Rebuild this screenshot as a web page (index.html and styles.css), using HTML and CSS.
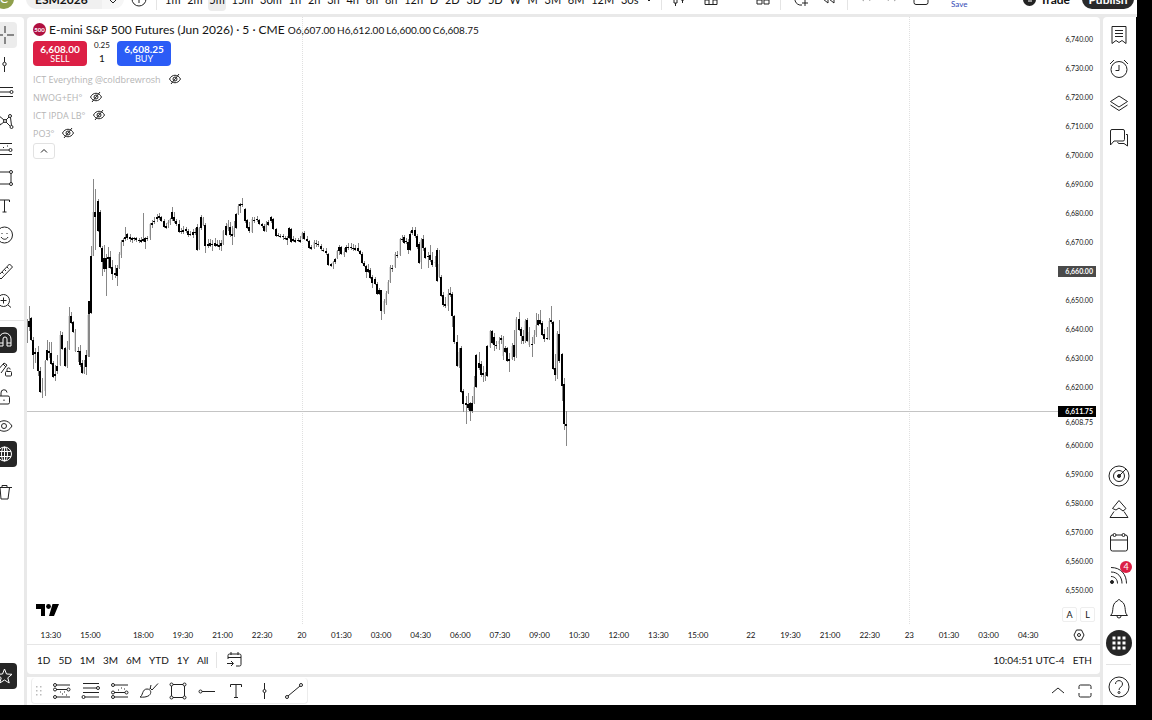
FILE: index.html
```html
<!DOCTYPE html>
<html lang="en">
<head>
<meta charset="utf-8">
<title>ESM2026 chart</title>
<link rel="stylesheet" href="styles.css">
</head>
<body>
<div class="app">
  <header class="topbar">
    <div class="topbar-row">
      <span class="avatar">C</span>
      <button class="symbol">ESM2026</button>
      <button class="tool pill-end" aria-label="Sync"><svg class="i20" viewBox="0 0 20 20"><path d="M5 9l5 5 5-5-3-4H8zM8 9l2 2 2-2"/></svg></button>
      <button class="tool" aria-label="Compare"><svg class="i20" viewBox="0 0 20 20"><circle cx="10" cy="10" r="7"/><path d="M10 6v8M6 10h8"/></svg></button>
      <span class="vline"></span>
      <nav class="intervals" id="intervals"></nav>
      <span class="vline"></span>
      <div class="toolset charttools">
        <button class="tool" aria-label="Candles"><svg class="i20" viewBox="0 0 20 20"><path d="M5 6h3v8H5zM6.500 14v3M12 5h3v6h-3zM13.500 11v3"/></svg></button>
        <button class="tool" aria-label="Indicators"><svg class="i20" viewBox="0 0 20 20"><path d="M4 15.500V11h4V8h4v3h4V6M4 15.500h12V6M8 11v4.500M12 11v4.500"/></svg></button>
        <button class="tool" aria-label="Favorites"><svg class="i8" viewBox="0 0 8 8"><path d="M2 3l2 2 2-2"/></svg></button>
        <button class="tool" aria-label="Layouts"><svg class="i20" viewBox="0 0 20 20"><path d="M4 11h5v4H4zM11 11h5v4h-5zM4 5h5v4H4zM11 5h5v4h-5z"/></svg></button>
      </div>
      <span class="vline"></span>
      <div class="toolset">
        <button class="tool" aria-label="Alert"><svg class="i20" viewBox="0 0 20 20"><path d="M12 16a6 6 0 1 1 4-9M15 10v7M12 14h6"/></svg></button>
        <button class="tool" aria-label="Replay"><svg class="i20" viewBox="0 0 20 20"><path d="M10 6l-5 4 5 4zM16 6l-5 4 5 4z"/></svg></button>
      </div>
      <span class="vline"></span>
      <div class="toolset history">
        <button class="tool faint" aria-label="Undo"><svg class="i20" viewBox="0 0 20 20"><path d="M9 5l-4 4 4 3M5 8h8l2 4"/></svg></button>
        <button class="tool faint" aria-label="Redo"><svg class="i20" viewBox="0 0 20 20"><path d="M11 5l4 4-4 3M15 8H7l-2 4"/></svg></button>
        <button class="tool" aria-label="Layout"><svg class="i20" viewBox="0 0 20 20"><rect x="3" y="3" width="14" height="12.500" rx="2"/></svg></button>
      </div>
      <button class="save">Save</button>
      <button class="trade"><span class="trade-dot"><svg class="i8" viewBox="0 0 8 8"><path d="M3 1v6M5 1v6"/></svg></span>Trade</button>
      <button class="publish">Publish</button>
    </div>
  </header>

  <div class="workspace">
    <aside class="left">
      <div class="lgroup lgroup-draw">
        <button class="lb on" aria-label="Cross"><svg class="i20" viewBox="0 0 20 20"><path d="M10 1v7M10 12v7M1 10h7M12 10h7"/></svg></button>
        <button class="lb" aria-label="Line"><svg class="i20" viewBox="0 0 20 20"><path d="M9.500 3v5M9.500 12v6"/><circle cx="9.500" cy="10" r="1.700"/></svg></button>
        <button class="lb" aria-label="Fib"><svg class="i20" viewBox="0 0 20 20"><path d="M1 5.500h17M1 10h14M1 14.500h17"/><circle cx="16.500" cy="10" r="1.500"/></svg></button>
        <button class="lb" aria-label="Pattern"><svg class="i20" viewBox="0 0 20 20"><path d="M3 4l2 10 4-3M3 4l6 5M11 9l3-3M11 11l4 4M15.500 6.500l1 8"/><circle cx="15" cy="5" r="1.500"/><circle cx="10" cy="10" r="1.500"/><circle cx="16.500" cy="16" r="1.500"/></svg></button>
        <button class="lb" aria-label="Forecast"><svg class="i20" viewBox="0 0 20 20"><path d="M1 4.500h16M1 11h13M1 15.500h16"/><path d="M8 8.500h1M12 7h1"/><circle cx="15.500" cy="11" r="1.500"/></svg></button>
        <button class="lb" aria-label="Shapes"><svg class="i20" viewBox="0 0 20 20"><path d="M1 4h13.500M16 5.500v9M14.500 16H1"/><circle cx="16" cy="4" r="1.500"/><circle cx="16" cy="16" r="1.500"/></svg></button>
        <button class="lb" aria-label="Text"><svg class="i20" viewBox="0 0 20 20"><path d="M4.500 6V4h10v2M9.500 4v12M7.500 16h4"/></svg></button>
        <button class="lb" aria-label="Emoji"><svg class="i20" viewBox="0 0 20 20"><circle cx="9.500" cy="10" r="8"/><path d="M6 12c2 3 5.500 3 7 0M7 8v1M12 8v1"/></svg></button>
      </div>
      <div class="lgroup lgroup-measure">
        <button class="lb" aria-label="Ruler"><svg class="i20" viewBox="0 0 20 20"><path d="M14.500 2l3 3L6 17l-3-3zM12 5l1.500 1.500M9.500 7.500L11 9M7 10l1.500 1.500"/></svg></button>
        <button class="lb" aria-label="Zoom in"><svg class="i20" viewBox="0 0 20 20"><circle cx="8.500" cy="9.500" r="6"/><path d="M13 14l3 2.500M5.500 9.500h6M8.500 6.500v6"/></svg></button>
      </div>
      <div class="lgroup lgroup-modes">
        <button class="lb dark" aria-label="Magnet"><svg class="i20" viewBox="0 0 20 20"><path d="M4 16V9a6 6 0 0 1 12 0v7h-4V9a2 2 0 0 0-4 0v7zM4 13h4M12 13h4"/></svg></button>
        <button class="lb" aria-label="Stay in drawing mode"><svg class="i20" viewBox="0 0 20 20"><path d="M2 12l7-8 3 2-6 8M8 5l3 3"/><rect x="10.500" y="12.500" width="6" height="4.500" rx="1"/><path d="M12 12v-1.500a1.600 1.600 0 0 1 3.200 0"/></svg></button>
        <button class="lb" aria-label="Lock drawings"><svg class="i20" viewBox="0 0 20 20"><rect x="3" y="9" width="11.500" height="8" rx="1.500"/><path d="M6 9V6a3 3 0 0 1 6-.5M9 12.500v1.500"/></svg></button>
        <button class="lb" aria-label="Hide drawings"><svg class="i20" viewBox="0 0 20 20"><path d="M1 10c4-7 12-7 16 0-4 7-12 7-16 0z"/><circle cx="9" cy="10" r="2.500"/></svg></button>
        <button class="lb dark" aria-label="Sync drawings"><svg class="i20" viewBox="0 0 20 20"><circle cx="9.500" cy="10" r="7"/><ellipse cx="9.500" cy="10" rx="3" ry="7"/><path d="M3 7.500h13M3 12.500h13M9.500 3v14"/></svg></button>
      </div>
      <button class="lb trash" aria-label="Remove"><svg class="i20" viewBox="0 0 20 20"><path d="M2 5.500h15M7 5V3.500h5V5M5 5.500l1 11.500h7l1.500-11.500"/></svg></button>
      <button class="lb dark star" aria-label="Favorites"><svg class="i20" viewBox="0 0 20 20"><path d="M9.500 3l2 5 5.500.3-4.200 3.500 1.400 5.200-4.700-3-4.700 3 1.400-5.200L2 8.300 7.500 8z"/></svg></button>
    </aside>

    <main class="center">
      <section class="chart">
        <div class="chart-main">
          <div class="plot">
            <svg class="candles" id="candles" role="img" aria-label="Price candles"></svg>
            <div class="legend">
              <div class="title-row">
                <span class="badge500">500</span>
                <h1 class="title">E-mini S&amp;P 500 Futures (Jun 2026) · 5 · CME</h1>
                <p class="ohlc"><span>O6,607.00</span><span>H6,612.00</span><span>L6,600.00</span><span>C6,608.75</span></p>
              </div>
              <div class="order-row">
                <button class="order sell"><b>6,608.00</b><span>SELL</span></button>
                <div class="spread"><span>0.25</span><span class="qty">1</span></div>
                <button class="order buy"><b>6,608.25</b><span>BUY</span></button>
              </div>
              <ul class="studies" id="studies"></ul>
              <button class="collapse" aria-label="Collapse legend"><svg class="i8" viewBox="0 0 8 8"><path d="M1 5.500l3-3 3 3"/></svg></button>
            </div>
            <svg class="logo" viewBox="0 0 23 12" role="img" aria-label="TradingView"><path d="M0 0h9v12H5V5H0zM16.500 0H23l-5 12h-5z"/><circle cx="12.500" cy="2.500" r="2.400"/></svg>
          </div>
          <div class="price-axis">
            <ol class="prices" id="prices"></ol>
            <div class="scale-btns"><button>A</button><button>L</button></div>
          </div>
        </div>
        <div class="time-row">
          <div class="times" id="times"></div>
          <button class="axis-settings" aria-label="Axis settings"><svg class="i12" viewBox="0 0 12 12"><path d="M3.500 1h5L11 6l-2.500 5h-5L1 6z"/><circle cx="6" cy="6" r="1.500"/></svg></button>
        </div>
        <div class="ranges">
          <button>1D</button><button>5D</button><button>1M</button><button>3M</button><button>6M</button><button>YTD</button><button>1Y</button><button>All</button>
          <span class="vline"></span>
          <button class="goto" aria-label="Go to date"><svg class="i18" viewBox="0 0 18 18"><path d="M3 8V4.500A1.500 1.500 0 0 1 4.500 3h10A1.500 1.500 0 0 1 16 4.500v9a1.500 1.500 0 0 1-1.500 1.500H11M3 6.500h13M6 1v3M13 1v3M2 12.500h6M6 10l2.500 2.500L6 15"/></svg></button>
          <button class="clock">10:04:51 UTC-4</button>
          <button>ETH</button>
        </div>
      </section>

      <section class="bottom">
        <div class="favs">
          <svg class="grip" viewBox="0 0 8 12"><path d="M1 1h1.500v1.500H1zM5 1h1.500v1.500H5zM1 5h1.500v1.500H1zM5 5h1.500v1.500H5zM1 9h1.500v1.500H1zM5 9h1.500v1.500H5z"/></svg>
          <button aria-label="Fib channel"><svg class="i20" viewBox="0 0 20 20"><path d="M4 4h14M4 8.500h11M4 16h14"/><path d="M8 11h1M12 11h1M10 13h1M14 14h1"/><circle cx="3" cy="4" r="1.500"/><circle cx="3" cy="8.500" r="1.500"/><circle cx="16.500" cy="8.500" r="1.500"/><circle cx="3" cy="16" r="1.500"/></svg></button>
          <button aria-label="Fib retracement"><svg class="i20" viewBox="0 0 20 20"><path d="M2 2.500h16M2 7h14M2 11.500h16M4 16h14"/><circle cx="17" cy="7" r="1.500"/><circle cx="2.500" cy="16" r="1.500"/></svg></button>
          <button aria-label="Position"><svg class="i20" viewBox="0 0 20 20"><path d="M4 4h14M4 11.500h11M4 16h14"/><path d="M8 9h1M11 7h1M14 8h1"/><circle cx="3" cy="4" r="1.500"/><circle cx="3" cy="11.500" r="1.500"/><circle cx="16.500" cy="11.500" r="1.500"/><circle cx="3" cy="16" r="1.500"/></svg></button>
          <button aria-label="Brush"><svg class="i20" viewBox="0 0 20 20"><path d="M1 16c3-1 2-8 7-8 4 0 5 4 2 6.500C8 16 4 16.500 1 16zM11 8l1-4M13 9l6-6.500M11 7l2 2"/></svg></button>
          <button aria-label="Rectangle"><svg class="i20" viewBox="0 0 20 20"><path d="M5 3.500h10M5 16.500h10M3.500 5v10M16.500 5v10"/><circle cx="3.500" cy="3.500" r="1.500"/><circle cx="16.500" cy="3.500" r="1.500"/><circle cx="3.500" cy="16.500" r="1.500"/><circle cx="16.500" cy="16.500" r="1.500"/></svg></button>
          <button aria-label="Horizontal ray"><svg class="i20" viewBox="0 0 20 20"><path d="M5 10.500h13"/><circle cx="3.500" cy="10.500" r="1.500"/></svg></button>
          <button aria-label="Text"><svg class="i20" viewBox="0 0 20 20"><path d="M4.500 6V3.500h11V6M10 4v12M8 16.500h4"/></svg></button>
          <button aria-label="Vertical line"><svg class="i20" viewBox="0 0 20 20"><path d="M9.500 2v6.500M9.500 11.500V18"/><circle cx="9.500" cy="10" r="1.500"/></svg></button>
          <button aria-label="Trend line"><svg class="i20" viewBox="0 0 20 20"><path d="M4 15L16 5"/><circle cx="3" cy="16" r="1.500"/><circle cx="17" cy="4" r="1.500"/></svg></button>
        </div>
        <div class="panel-btns">
          <button aria-label="Open panel"><svg class="i18" viewBox="0 0 18 18"><path d="M3 11l6-5 6 5"/></svg></button>
          <button aria-label="Maximize"><svg class="i18" viewBox="0 0 18 18"><path d="M3 7V4.500A1.500 1.500 0 0 1 4.500 3h9A1.500 1.500 0 0 1 15 4.500V7M3 11v2.500A1.500 1.500 0 0 0 4.500 15h9a1.500 1.500 0 0 0 1.500-1.500V11"/></svg></button>
        </div>
      </section>
    </main>

    <aside class="right">
      <div class="rgroup">
        <button class="rb" aria-label="Watchlist"><svg class="i22" viewBox="0 0 22 22"><path d="M4 2.500h14v17l-4-3-3 2-3-2-4 3zM7 6.500h8M7 9.500h8M7 12.500h8"/></svg></button>
        <button class="rb" aria-label="Alerts"><svg class="i22" viewBox="0 0 22 22"><circle cx="11" cy="11.500" r="8"/><path d="M11 7v5.500H7.500M2 6l4-4M20 6l-4-4"/></svg></button>
        <button class="rb" aria-label="Object tree"><svg class="i22" viewBox="0 0 22 22"><path d="M11 4l8.500 5.500L11 15 2.500 9.500zM2.500 13L11 18.500l8.500-5.500"/></svg></button>
        <button class="rb" aria-label="Chats"><svg class="i22" viewBox="0 0 22 22"><path d="M2.500 19V5A1.500 1.500 0 0 1 4 3.500h11A1.500 1.500 0 0 1 16.500 5v8.500a1.500 1.500 0 0 1-1.500 1.500H6zM18 8.500h1.500V20L16 17.500h-5.500L9.500 16"/></svg></button>
      </div>
      <div class="rgroup rgroup-low">
        <button class="rb" aria-label="Screeners"><svg class="i22" viewBox="0 0 22 22"><circle cx="11" cy="11" r="10"/><circle cx="11" cy="11" r="5.500"/><circle class="fill" cx="11" cy="11" r="1.500"/><path d="M11 11l7-7"/></svg></button>
        <button class="rb" aria-label="Pine"><svg class="i22" viewBox="0 0 22 22"><path d="M11 2.500l7 8-3 2.500-4-3-3 2-3.500-1.500zM6 13.500L2 19.500h18l-4-6"/></svg></button>
        <button class="rb" aria-label="Calendar"><svg class="i22" viewBox="0 0 22 22"><path d="M5.500 4h-1A2 2 0 0 0 2.500 6v12a2 2 0 0 0 2 2h13a2 2 0 0 0 2-2V6a2 2 0 0 0-2-2h-1M8 4h6M2.500 9h17"/><circle cx="6.500" cy="4" r="1.500"/><circle cx="15.500" cy="4" r="1.500"/></svg></button>
        <button class="rb" aria-label="News feed, 4 new"><svg class="i22" viewBox="0 0 22 22"><circle class="fill" cx="4" cy="18" r="1.500"/><path d="M3 12.500c4 0 6.500 3 6.500 7M3 8c7 0 11 5 11 11.500M3 3.500c10 0 15.500 7 15.500 16"/></svg><span class="count">4</span></button>
        <button class="rb" aria-label="Notifications"><svg class="i22" viewBox="0 0 22 22"><path d="M2.500 18.500c2.500-2 2-5 2.500-8 .5-4 2.500-6 4.500-6.500C10 2 12 2 12.500 4c2 .5 4 2.500 4.500 6.500.5 3 0 6 2.500 8zM9 19a2 2 0 0 0 4 0"/></svg></button>
        <button class="rb apps" aria-label="Products"><svg class="i26" viewBox="0 0 26 26"><circle class="disc" cx="13" cy="13" r="13"/><path class="dots" d="M6 6h4v4H6zM11 6h4v4h-4zM16 6h4v4h-4zM6 11h4v4H6zM11 11h4v4h-4zM16 11h4v4h-4zM6 16h4v4H6zM11 16h4v4h-4zM16 16h4v4h-4z"/></svg></button>
        <span class="hline"></span>
        <button class="rb" aria-label="Help"><svg class="i22" viewBox="0 0 22 22"><circle cx="11" cy="11" r="10"/><path d="M7.500 8c0-4.500 7-4.500 7 0 0 3-3.500 3-3.500 6"/><circle cx="11" cy="16.500" r="1"/></svg></button>
      </div>
    </aside>
  </div>
</div>
<script src="chart.js"></script>
</body>
</html>
```
FILE: styles.css
```css
* { box-sizing: border-box; }
body {
  margin: 0;
  height: 100vh;
  padding: 0 15px 15px 0;
  overflow: hidden;
  background: #000;
  color: #131313;
  font-family: Lato, "Open Sans", sans-serif;
  font-size: 10px;
}
button { border: 0; padding: 0; margin: 0; background: none; color: inherit; font: inherit; }
svg { display: block; flex: none; fill: none; stroke: #222; stroke-width: 1; }
.fill { fill: #222; }
.i8 { width: 8px; height: 8px; }
.i12 { width: 12px; height: 12px; }
.i18 { width: 18px; height: 18px; }
.i20 { width: 20px; height: 20px; }
.i22 { width: 22px; height: 22px; }
.i26 { width: 26px; height: 26px; }
.vline { width: 1px; height: 22px; background: #e4e4e4; }

.app { height: 100%; display: flex; flex-direction: column; gap: 3px; background: #e9e9e9; overflow: hidden; }

/* Top bar, scrolled half out of view */
.topbar { flex: none; height: 14px; overflow: hidden; background: #fff; }
.topbar-row { display: flex; align-items: center; height: 24px; margin-top: -13px; padding: 0 3px 0 0; font-size: 12px; }
.avatar { flex: none; width: 20px; height: 20px; margin: 0 12px 0 -6px; border-radius: 50%; background: #8f9f4c; color: #fff; text-align: center; line-height: 20px; }
.symbol { width: 76px; height: 20px; padding-left: 9px; border-radius: 10px 0 0 10px; background: #f0f0f0; text-align: left; font-weight: 700; }
.tool { display: flex; align-items: center; justify-content: center; }
.pill-end { width: 22px; height: 20px; margin-right: 5px; border-radius: 0 10px 10px 0; background: #f6f6f6; }
.topbar .vline { margin: 0 7px; }
.intervals { flex: 1; display: flex; justify-content: space-between; font-size: 11px; }
.intervals button { height: 24px; padding: 0 1px; border-radius: 4px; }
.intervals .on { background: #ececec; }
.toolset { display: flex; gap: 8px; padding: 0 2px; align-items: center; }
.charttools { gap: 12px; padding: 0; }
.faint { opacity: .4; }
.history { padding: 0; }
.save { width: 56px; padding-top: 10px; font-size: 8px; line-height: 10px; color: #3147b5; }
.trade { display: flex; align-items: center; gap: 4px; margin: 0 12px 0 36px; font-weight: 700; }
.trade-dot { display: flex; align-items: center; justify-content: center; width: 13px; height: 13px; border-radius: 50%; background: #222; }
.trade-dot svg { stroke: #fff; }
.publish { width: 52px; height: 20px; border-radius: 10px; background: #2a2a2a; color: #fff; font-weight: 700; }

.workspace { flex: 1; min-height: 0; display: flex; gap: 3px; }

/* Drawing toolbar, its left edge cut by the window */
.left { flex: none; width: 31px; margin-left: -7px; padding: 5px 0 16px; background: #fff; display: flex; flex-direction: column; border-radius: 0 4px 0 0; }
.lgroup { display: flex; flex-direction: column; justify-content: space-between; }
.lgroup-draw { height: 226px; }
.lgroup-measure { height: 66px; padding: 11px 0 0; }
.lgroup-modes { height: 147px; margin-top: 6px; padding-top: 6px; border-top: 1px solid #e4e4e4; }
.lb { flex: none; width: 24px; height: 26px; display: flex; align-items: center; justify-content: center; border-radius: 4px; }
.lb.on { background: #ececec; }
.lb.dark { background: #262626; }
.lb.dark svg { stroke: #fff; }
.trash { margin-top: 12px; }
.star { margin-top: auto; }

.center { flex: 1; min-width: 0; display: flex; flex-direction: column; gap: 3px; }
.chart { flex: 1; min-height: 0; display: flex; flex-direction: column; background: #fff; border-radius: 4px; overflow: hidden; }
.chart-main { flex: 1; min-height: 0; display: flex; }
.plot { position: relative; flex: 1; min-width: 0; display: flex; flex-direction: column; justify-content: space-between; align-items: flex-start; padding: 4px 0 9px 6px; }
.candles { position: absolute; inset: 0; width: 100%; height: 100%; shape-rendering: crispEdges; }
.legend { position: relative; display: flex; flex-direction: column; align-items: flex-start; }
.title-row { display: flex; align-items: center; gap: 3px; height: 17px; }
.badge500 { width: 13px; height: 13px; border-radius: 50%; background: #b01040; color: #fff; font-size: 6px; font-weight: 700; line-height: 13px; text-align: center; }
.title { margin: 0; font-size: 12px; font-weight: 400; line-height: 16px; white-space: nowrap; }
.ohlc { display: flex; gap: 2px; margin: 0; line-height: 14px; }
.order-row { display: flex; margin-top: 3px; }
.order { width: 54px; height: 25px; display: flex; flex-direction: column; align-items: center; justify-content: center; border-radius: 4px; color: #fff; font-size: 9px; line-height: 10px; }
.order b { font-size: 10px; }
.sell { background: #dc1f45; }
.buy { background: #2b5cf6; }
.spread { width: 30px; display: flex; flex-direction: column; align-items: center; font-size: 8px; line-height: 8px; }
.qty { font-size: 10px; line-height: 18px; }
.studies { list-style: none; margin: 3px 0 0; padding: 0; color: #b5b5b5; font-family: "Open Sans", sans-serif; font-size: 9px; }
.studies li { display: flex; align-items: center; gap: 8px; height: 18px; }
.collapse { display: flex; align-items: center; justify-content: center; width: 22px; height: 16px; margin-top: 1px; border: 1px solid #e2e2e2; border-radius: 3px; }
.logo { position: relative; width: 23px; height: 12px; margin-left: 3px; fill: #000; stroke: none; }

.price-axis { flex: none; width: 42px; display: flex; flex-direction: column; justify-content: space-between; padding: 8px 4px 3px 0; }
.prices { list-style: none; margin: 0; padding: 0; font-size: 7px; }
.prices li { height: 29px; display: flex; flex-direction: column; justify-content: center; line-height: 11px; text-align: right; }
.prices span { padding-right: 3px; }
.prices .tag { background: #000; color: #fff; font-weight: 700; }
.prices .tag-grey { background: #4a4a4a; color: #fff; font-weight: 700; }
.scale-btns { display: flex; gap: 3px; padding-left: 4px; font-size: 9px; }
.scale-btns button { width: 15px; height: 15px; border: 1px solid #eee; border-radius: 2px; }
.time-row { flex: none; display: flex; align-items: center; height: 20px; padding-top: 1px; border-bottom: 1px solid #e6e6e6; font-size: 8px; }
.times { flex: 1; display: flex; padding: 0 10px 0 4px; text-align: center; }
.tick { flex: 3 1 0; min-width: 0; }
.gap { flex: 1 1 0; }
.axis-settings { width: 42px; display: flex; justify-content: center; }
.ranges { flex: none; display: flex; align-items: center; gap: 8px; height: 29px; padding: 0 8px 0 10px; }
.ranges .vline { height: 16px; }
.clock { margin-left: auto; }

.bottom { flex: none; height: 28px; display: flex; align-items: center; justify-content: space-between; background: #fff; padding: 0 6px 0 4px; }
.favs { display: flex; align-items: center; gap: 9px; height: 26px; padding: 0 3px; border: solid #ececec; border-width: 0 1px 1px; border-radius: 4px; }
.grip { width: 8px; height: 12px; fill: #bbb; stroke: none; }
.panel-btns { display: flex; gap: 9px; }

.right { flex: none; width: 34px; display: flex; flex-direction: column; justify-content: space-between; background: #fff; padding: 1px 2px 2px 0; border-radius: 4px 0 0 0; border-right: 1px solid #000; }
.rgroup { display: flex; flex-direction: column; }
.rb { position: relative; height: 34px; display: flex; align-items: center; justify-content: center; }
.rgroup-low .rb { height: 33px; }
.rgroup-low .apps { height: 38px; }
.hline { height: 1px; margin: 2px 3px 5px; background: #e4e4e4; }
.count { position: absolute; top: 3px; right: 2px; width: 12px; height: 12px; border-radius: 50%; background: #dc1f45; color: #fff; font-size: 9px; line-height: 12px; text-align: center; }
.disc { fill: #262626; stroke: none; }
.dots { fill: #fff; stroke: #262626; }
```
FILE: chart.js
```js
// Interval buttons
const intervals = "1m 2m 5m 15m 30m 1h 2h 3h 4h 6h 8h 12h D 2D 3D 5D W M 3M 6M 12M 30s".split(" ");
document.getElementById("intervals").innerHTML =
  intervals.map(t => `<button${t === "5m" ? ' class="on"' : ""}>${t}</button>`).join("") +
  '<button aria-label="More intervals"><svg class="i8" viewBox="0 0 8 8"><path d="M2 4l2 2 2-2"/></svg></button>';

// Hidden studies
const eye = '<svg class="i12" viewBox="0 0 12 12"><path d="M.5 6c2.500-5 8.500-5 11 0-2.500 5-8.500 5-11 0zM2 11l8-10"/><circle cx="6" cy="6" r="2"/></svg>';
document.getElementById("studies").innerHTML =
  ["ICT Everything @coldbrewrosh", "NWOG+EH°", "ICT IPDA LB°", "PO3°"]
    .map(t => `<li><span>${t}</span><button aria-label="Show ${t}">${eye}</button></li>`).join("");

// Price scale
let rows = "";
for (let p = 6740; p >= 6550; p -= 10) {
  const label = p.toLocaleString("en-US") + ".00";
  if (p === 6610) rows += '<li><span class="tag">6,611.75</span><span>6,608.75</span></li>';
  else rows += `<li><span${p === 6660 ? ' class="tag-grey"' : ""}>${label}</span></li>`;
}
document.getElementById("prices").innerHTML = rows;

// Time scale; "|" is the short daily break
document.getElementById("times").innerHTML =
  "13:30 15:00 | 18:00 19:30 21:00 22:30 20 01:30 03:00 04:30 06:00 07:30 09:00 10:30 12:00 13:30 15:00 | 22 19:30 21:00 22:30 23 01:30 03:00 04:30"
    .split(" ").map(t => t === "|" ? '<span class="gap"></span>' : `<span class="tick">${t}</span>`).join("");

// Candles: x, high, body top, body bottom, low; "u" marks a rising candle
const candles = `
27 319 323 330 343 u|29 306 321 327 331|31 317 318 340 341|33 337 340 355 369|35 348 352 354 363|38 346 352 371 376|40 367 371 392 393|42 378 391 393 398 u|45 360 361 391 396 u|47 340 350 360 361|49 342 351 353 358|51 342 353 364 365|53 361 363 377 378|55 365 374 376 381|57 355 366 371 374|60 331 335 365 366 u|62 332 335 349 350|65 347 348 366 367|67 341 349 366 368 u|69 307 316 349 350 u|71 312 316 323 324|73 321 322 332 333|75 329 332 351 352 u|78 347 351 352 362|80 345 351 365 367|82 360 363 373 374|84 360 367 373 374 u|86 350 355 367 375|89 301 301 314 357|88 314 315 356 357 u|91 246 256 313 314|93 179 212 256 256 u|95 189 212 217 250|98 199 201 231 232|100 210 212 247 248|102 246 248 262 276|104 245 258 269 272|106 254 258 269 296|108 247 257 259 268|110 251 257 268 269|112 260 267 274 280|115 265 273 275 278|117 265 268 276 286|119 252 254 268 269 u|121 240 242 255 258 u|123 238 240 242 246|125 227 237 239 241|127 233 234 238 240|130 234 237 239 242|132 237 238 240 243|134 237 238 239 241|136 237 238 240 242|139 238 240 241 243|141 237 240 242 243|143 213 239 241 242|145 237 238 242 249|147 236 238 239 241|150 223 224 238 240 u|152 220 223 225 228|154 217 221 222 224|157 214 217 219 222|159 213 216 218 220|161 216 217 221 222|164 219 221 227 228|166 223 226 228 229|168 220 222 224 228 u|170 218 219 223 225 u|172 207 212 219 221|174 212 217 221 223|176 219 221 224 226|179 220 224 232 233|181 228 231 232 234|183 226 230 232 234|186 227 229 231 233|188 229 231 235 237|190 231 234 235 236|193 229 232 235 238|195 228 232 233 235|197 224 227 250 251|199 227 228 249 250 u|201 215 217 228 230|203 217 218 225 226 u|205 223 225 246 253|208 239 244 246 248|210 239 243 246 247|212 240 244 245 251|215 238 243 246 247|217 240 244 246 247|219 240 245 247 250|221 240 243 246 251|223 230 231 244 245 u|226 223 226 235 236|228 220 224 229 231 u|230 222 227 235 237|232 226 234 236 245|234 221 228 235 237 u|236 213 214 228 229|238 204 206 214 215 u|240 203 204 206 213|242 198 204 205 207|245 208 209 221 223|247 219 220 228 229|249 222 227 231 233|252 217 219 232 233 u|254 217 220 221 223|257 216 219 220 222|259 219 220 224 225|262 223 224 226 228|264 224 226 231 232|266 221 224 231 232 u|268 220 222 225 226|271 216 217 221 223|273 218 219 229 230|276 228 229 236 237|278 233 235 236 237|280 234 236 237 238|283 234 236 237 240|285 236 238 239 240|287 236 238 240 245|289 227 228 238 239|291 228 229 242 243|293 236 239 241 242|295 238 240 242 243|298 238 240 241 242|300 236 240 242 243|302 232 233 238 239 u|304 231 233 239 240|307 236 239 241 242|309 240 241 248 249|311 245 247 249 250|314 240 242 248 249 u|316 240 243 244 247|318 241 244 245 247|321 244 246 249 251|323 248 250 251 252|326 248 251 253 255|328 253 254 265 266|331 263 264 266 267|333 261 262 264 269 u|335 258 259 262 264|337 250 251 258 259 u|339 245 247 251 255|341 246 247 254 255|344 248 252 255 257 u|346 245 247 252 253|348 243 247 248 250|351 243 247 248 250|353 244 248 249 251|355 245 248 250 251|358 243 248 251 252|360 250 251 254 255|362 252 254 263 264|364 261 263 266 267|366 265 266 272 278|368 264 269 272 273|370 268 270 278 279|372 275 277 283 288|375 277 279 284 285|377 282 284 294 295|379 288 290 294 295|381 290 290 311 320|384 299 301 312 314 u|386 291 293 303 305 u|388 280 282 293 294 u|390 265 267 282 283 u|392 265 268 269 272|395 252 254 267 268 u|397 251 255 256 258|400 238 239 255 256 u|402 235 239 240 242|404 235 237 243 244|406 238 241 242 244|408 239 242 250 254|410 231 234 250 251|412 227 230 233 235|415 227 230 236 238|417 234 236 247 249|419 242 244 263 264|421 238 240 262 269 u|423 235 239 248 251|425 247 248 258 259|428 252 256 257 268|430 245 255 260 262|432 252 260 265 267|435 256 262 263 267 u|437 248 250 281 282|439 250 264 277 278 u|441 275 277 296 297|443 292 295 305 307|445 297 304 306 308|448 289 294 306 311 u|450 287 293 295 297|452 292 294 316 327|454 315 316 342 344|457 335 342 366 367|459 348 352 366 368 u|461 346 348 392 393|463 389 391 404 412|466 396 403 405 424|468 393 404 408 410|470 402 403 411 421|472 396 403 411 413|474 376 387 403 404 u|476 354 355 387 388|479 352 363 368 370|481 361 364 375 377|483 366 373 375 382|485 372 375 377 381 u|487 345 346 376 377|490 330 331 347 348 u|492 330 331 343 344|494 333 337 345 351|496 341 345 346 349|499 337 341 344 350 u|501 335 338 340 344|503 336 338 356 360 u|505 346 348 352 353|507 347 348 361 362|509 353 359 361 372|512 343 346 359 360 u|514 330 345 357 361|516 317 319 356 358 u|519 312 319 330 331|521 327 329 336 344|523 330 336 341 344|525 319 321 341 343 u|527 318 320 341 342|529 327 332 345 347 u|532 337 344 345 357|534 330 335 343 344 u|536 313 325 335 337 u|538 314 320 325 326|540 310 320 324 325|542 321 323 335 336|544 329 334 339 342|547 327 338 339 340|549 318 321 339 340 u|551 306 320 322 324|553 321 322 369 370|555 354 368 375 381|557 331 333 375 379 u|559 320 334 361 363|562 353 354 386 401|564 378 384 424 430|566 411 424 426 446`;
const x0 = 27, y0 = 17;
let out = "";
for (const x of [302, 909])
  out += `<path stroke="#e0e0e0" stroke-dasharray="1 1" d="M${x - x0 + 0.5} 0V2000"/>`;
out += `<path stroke="#c4c4c4" d="M0 ${411 - y0 + 0.5}H4000"/>`;
for (const row of candles.trim().split("|")) {
  const [x, high, top, bottom, low, rising] = row.split(" ").map((v, i) => i < 5 ? +v : v);
  const cx = x - x0;
  out += `<rect x="${cx}" y="${high - y0}" width="1" height="${low - high}" fill="#888" stroke="none"/>`;
  if (rising) out += `<rect x="${cx - 1}" y="${top - y0}" width="1" height="${bottom - top}" fill="#dcdcdc" stroke="none"/>`;
  else out += `<rect x="${cx - 1}" y="${top - y0}" width="2" height="${Math.max(1, bottom - top)}" fill="#000" stroke="none"/>`;
}
document.getElementById("candles").innerHTML = out;
```
